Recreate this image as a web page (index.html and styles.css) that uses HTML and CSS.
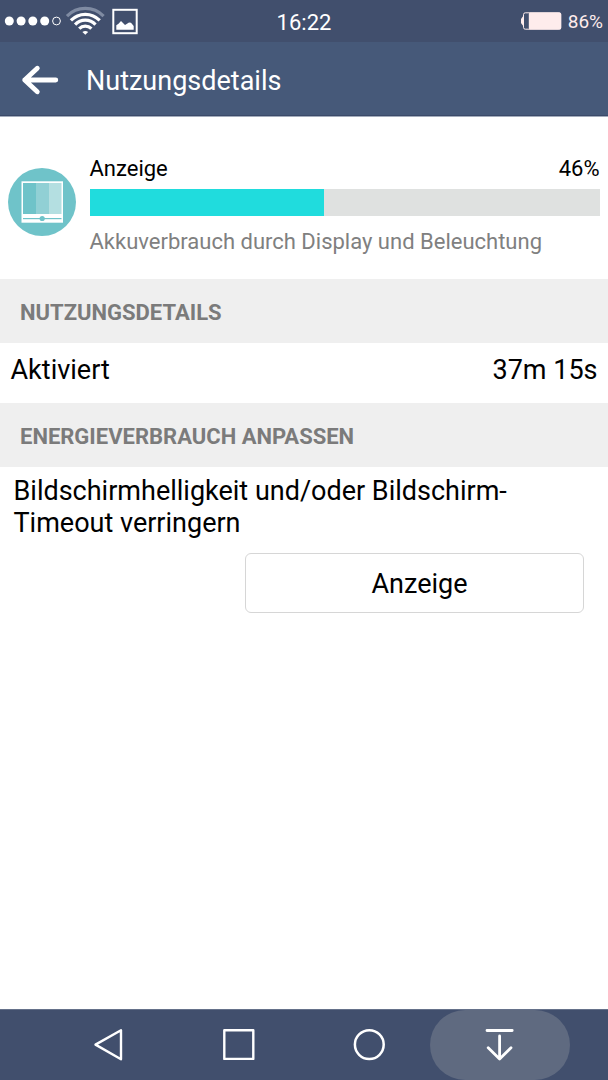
FILE: index.html
```html
<!DOCTYPE html>
<html lang="de">
<head>
    <meta charset="UTF-8">
    <meta name="viewport" content="width=device-width, initial-scale=1.0">
    <title>Nutzungsdetails</title>
    <link rel="stylesheet" href="styles.css">
</head>
<body>
    <div class="status-bar">
        <div class="status-left">
            <svg width="140" height="42" viewBox="0 0 140 42">
                <g fill="#fff">
                    <circle cx="9.3" cy="21" r="4.5"/>
                    <circle cx="21.1" cy="21" r="4.5"/>
                    <circle cx="32.8" cy="21" r="4.5"/>
                    <circle cx="44.7" cy="21" r="4.5"/>
                </g>
                <circle cx="56.5" cy="21" r="3.9" fill="none" stroke="#fff" stroke-width="1"/>
                <g fill="none" stroke="#fff" stroke-width="3.2">
                    <path d="M67 16.2A25.5 25.5 0 0 1 103.6 16.2" stroke="#7f8ba2"/>
                    <path d="M70.9 20.4A20 20 0 0 1 99.7 20.4"/>
                    <path d="M75.1 24.6A14 14 0 0 1 95.5 24.6"/>
                    <path d="M79.2 28.7A8.6 8.6 0 0 1 91.4 28.7"/>
                </g>
                <path d="M82.4 32Q85.3 29.8 88.2 32L85.3 34.8Z" fill="#fff"/>
                <rect x="113.3" y="9.8" width="23.4" height="23.4" fill="none" stroke="#fff" stroke-width="2"/>
                <path d="M116.3 29.8V25.3L118.5 23.7L121 21L125 25L129 22.5L131 22.8L133.7 26V29.8Z" fill="#fff"/>
            </svg>
        </div>
        <div class="status-time">16:22</div>
        <div class="status-battery">
            <svg width="42" height="20" viewBox="0 0 42 20">
                <path d="M3.5 5.5H2.8L1 8V12L2.8 14.5H3.5Z" fill="#feecec"/>
                <rect x="3.5" y="1.8" width="37.2" height="16.4" rx="1.8" fill="none" stroke="#feecec"/>
                <rect x="8.8" y="1.5" width="32.4" height="17" rx="1.5" fill="#feecec"/>
            </svg>
            <span>86%</span>
        </div>
    </div>

    <div class="header">
        <a href="#" class="back-button" aria-label="Zurück">
            <svg width="38" height="32" viewBox="0 0 38 32" fill="none" stroke="#fff" stroke-width="4.8" stroke-linecap="round" stroke-linejoin="round">
                <path d="M34.8 16H3.7M16.3 4.2L3.7 16L16.3 27.8"/>
            </svg>
        </a>
        <h1>Nutzungsdetails</h1>
    </div>

    <div class="content">
        <div class="usage">
            <svg class="usage-icon" width="68" height="68" viewBox="0 0 68 68">
                <circle cx="34" cy="34" r="34" fill="#6fc3c9"/>
                <rect x="13.5" y="13.3" width="41.5" height="41.4" fill="#fff"/>
                <rect x="15" y="15" width="13" height="31" fill="#6fc3c9"/>
                <rect x="28" y="15" width="13" height="31" fill="#91d0d5"/>
                <rect x="41" y="15" width="12.5" height="31" fill="#b4dfe1"/>
                <rect x="15" y="50" width="38.5" height="1.2" fill="#6fc3c9"/>
                <circle cx="34.2" cy="50.5" r="2.6" fill="#6fc3c9"/>
            </svg>
            <div class="usage-info">
                <div class="usage-title">
                    <span>Anzeige</span>
                    <span>46%</span>
                </div>
                <div class="progress">
                    <div class="progress-bar" style="width: 46%"></div>
                </div>
                <p>Akkuverbrauch durch Display und Beleuchtung</p>
            </div>
        </div>

        <h2 class="section-title">NUTZUNGSDETAILS</h2>
        <div class="detail-row">
            <span>Aktiviert</span>
            <span>37m 15s</span>
        </div>

        <h2 class="section-title">ENERGIEVERBRAUCH ANPASSEN</h2>
        <div class="adjust">
            <p>Bildschirmhelligkeit und/oder Bildschirm-<br>Timeout verringern</p>
            <button type="button" class="adjust-button">Anzeige</button>
        </div>
    </div>

    <div class="nav-bar">
        <div class="nav-item">
            <svg width="34" height="34" viewBox="0 0 34 34" fill="none" stroke="#fff" stroke-width="2.4" stroke-linejoin="round">
                <path d="M29 2.3V31.3L3.5 16.6Z"/>
            </svg>
        </div>
        <div class="nav-item">
            <svg width="34" height="34" viewBox="0 0 34 34" fill="none" stroke="#fff" stroke-width="2.4" stroke-linejoin="round">
                <rect x="2.3" y="2.3" width="29" height="28.6"/>
            </svg>
        </div>
        <div class="nav-item">
            <svg width="34" height="34" viewBox="0 0 34 34" fill="none" stroke="#fff" stroke-width="2.5">
                <circle cx="16.3" cy="16.6" r="14.4"/>
            </svg>
        </div>
        <div class="nav-item active">
            <svg width="34" height="34" viewBox="0 0 34 34" fill="none" stroke="#fff" stroke-width="2.8" stroke-linecap="round" stroke-linejoin="round">
                <path d="M4 2.5H29.2M16.6 8V31M5.2 19.7L16.6 31L28 19.7"/>
            </svg>
        </div>
    </div>
</body>
</html>
```
FILE: styles.css
```css
* {
    margin: 0;
    padding: 0;
    box-sizing: border-box;
}

body {
    font-family: Roboto, sans-serif;
    background-color: #fff;
    color: #000;
    height: 100vh;
    display: flex;
    flex-direction: column;
    overflow: hidden;
}

svg {
    display: block;
    flex-shrink: 0;
}

.status-bar {
    display: grid;
    grid-template-columns: 1fr auto 1fr;
    align-items: center;
    height: 42px;
    background-color: #414f6d;
    color: #fff;
}

.status-time {
    font-size: 22px;
    line-height: 26px;
    padding-top: 3px;
}

.status-battery {
    display: flex;
    justify-content: flex-end;
    align-items: center;
    gap: 6px;
    padding-right: 5px;
    font-size: 19px;
    color: #feecec;
}

.header {
    display: flex;
    align-items: center;
    gap: 27px;
    height: 75px;
    padding: 2px 0 0 21px;
    background-color: #465979;
    border-bottom: 1px solid #a3acbc;
    box-shadow: inset 0 -1px #3b4a69;
    color: #fff;
}

.header h1 {
    padding-top: 2px;
    font-size: 27px;
    font-weight: 400;
}

.content {
    flex: 1;
}

.usage {
    display: flex;
    align-items: center;
    gap: 13.5px;
    height: 162px;
    padding: 8px 8.5px 0 8px;
}

.usage-info {
    flex: 1;
    padding-top: 6px;
}

.usage-title {
    display: flex;
    justify-content: space-between;
    font-size: 22px;
    line-height: 27px;
}

.progress {
    height: 27px;
    margin: 7px 0 13px;
    background-color: #dfe1e0;
}

.progress-bar {
    height: 100%;
    background-color: #20dcdd;
}

.usage-info p {
    font-size: 22px;
    line-height: 26px;
    color: #808080;
}

.section-title {
    height: 64px;
    padding: 1px 20px 0;
    background-color: #efefef;
    color: #7b7b7b;
    font-size: 22px;
    font-weight: 700;
    line-height: 65px;
}

.detail-row {
    display: flex;
    justify-content: space-between;
    height: 60px;
    padding: 0 10.5px;
    font-size: 27px;
    line-height: 55px;
}

.adjust {
    display: flex;
    flex-direction: column;
    padding: 8px 24px 0 13.5px;
}

.adjust p {
    font-size: 27px;
    line-height: 32px;
}

.adjust-button {
    align-self: flex-end;
    width: 339px;
    height: 60px;
    margin-top: 14px;
    padding: 2px 0 0 10px;
    border: 1px solid #d6d6d6;
    border-radius: 6px;
    background-color: #fff;
    font-family: inherit;
    font-size: 27px;
    color: #000;
}

.nav-bar {
    display: flex;
    justify-content: center;
    height: 71px;
    background-color: #414f6d;
    border-top: 1px solid #65718a;
}

.nav-item {
    display: flex;
    justify-content: center;
    align-items: center;
    width: 130.5px;
}

.nav-item.active {
    width: 140px;
    margin: 0 -5px;
    border-radius: 35px;
    background-color: #5f6a80;
}
```
